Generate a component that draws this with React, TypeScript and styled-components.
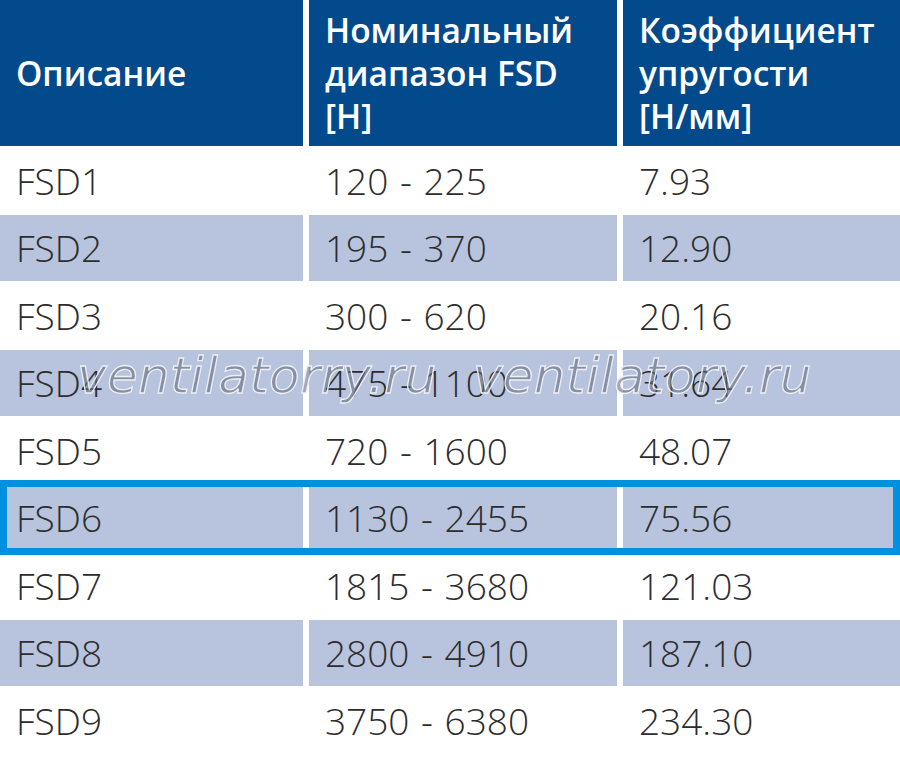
import { FC } from "react";
import styled, { createGlobalStyle } from "styled-components";

const rows = [
  ["FSD1", "120 - 225", "7.93"],
  ["FSD2", "195 - 370", "12.90"],
  ["FSD3", "300 - 620", "20.16"],
  ["FSD4", "475 - 1100", "31.64"],
  ["FSD5", "720 - 1600", "48.07"],
  ["FSD6", "1130 - 2455", "75.56"],
  ["FSD7", "1815 - 3680", "121.03"],
  ["FSD8", "2800 - 4910", "187.10"],
  ["FSD9", "3750 - 6380", "234.30"],
];

const highlightedRow = 5;

const App: FC = () => {
  return (
    <>
      <GlobalStyle />
      <Table>
        <Row $header>
          <HeadCell>Описание</HeadCell>
          <HeadCell>
            Номинальный
            <br />
            диапазон FSD
            <br />
            [Н]
          </HeadCell>
          <HeadCell>
            Коэффициент
            <br />
            упругости
            <br />
            [Н/мм]
          </HeadCell>
        </Row>
        {rows.map((row, i) => (
          <Row key={row[0]} $highlighted={i === highlightedRow}>
            {row.map((value, j) => (
              <Cell key={j} $shaded={i % 2 === 1}>
                {value}
              </Cell>
            ))}
          </Row>
        ))}
        <Watermark>ventilatorry.ru ventilatory.ru</Watermark>
      </Table>
    </>
  );
};

export default App;

const GlobalStyle = createGlobalStyle`
  html, body {
    margin: 0;
    padding: 0;
    background: #ffffff;
  }

  body {
    font-family: "Open Sans", "Noto Sans", sans-serif;
    overflow: hidden;
  }
`;

const Table = styled.div`
  position: relative;
  width: 900px;
  display: flex;
  flex-direction: column;
  gap: 1px;
`;

const Row = styled.div<{ $header?: boolean; $highlighted?: boolean }>`
  position: relative;
  display: grid;
  grid-template-columns: 303px 308px 277px;
  column-gap: 6px;
  height: ${(p) => (p.$header ? "146px" : "66.5px")};
  z-index: ${(p) => (p.$highlighted ? 1 : 0)};

  ${(p) =>
    p.$highlighted &&
    `
    &::after {
      content: "";
      position: absolute;
      top: -4.5px;
      bottom: -4px;
      left: 0;
      right: 0;
      border: 7px solid #0090e0;
      pointer-events: none;
    }
  `}
`;

const HeadCell = styled.div`
  display: flex;
  align-items: center;
  padding: 0 16px;
  background: #034a8c;
  color: #ffffff;
  font-weight: 550;
  font-size: 33.5px;
  line-height: 43px;
`;

const Cell = styled.div<{ $shaded: boolean }>`
  display: flex;
  align-items: center;
  padding: 0 16px;
  background: ${(p) => (p.$shaded ? "#b8c4dd" : "#ffffff")};
  color: #2d2d2d;
  font-weight: 300;
  font-size: 37px;
  word-spacing: 2px;
  white-space: nowrap;
`;

const Watermark = styled.div`
  position: absolute;
  top: 347px;
  left: 77px;
  z-index: 2;
  font-family: "DejaVu Sans", sans-serif;
  font-style: italic;
  font-weight: 400;
  font-size: 50px;
  letter-spacing: 0.3px;
  word-spacing: 20px;
  white-space: pre;
  color: rgba(255, 255, 255, 0.1);
  -webkit-text-stroke: 1.3px rgba(240, 242, 248, 0.95);
  text-shadow: 0 0 1px rgba(70, 80, 100, 0.55);
  pointer-events: none;
`;
